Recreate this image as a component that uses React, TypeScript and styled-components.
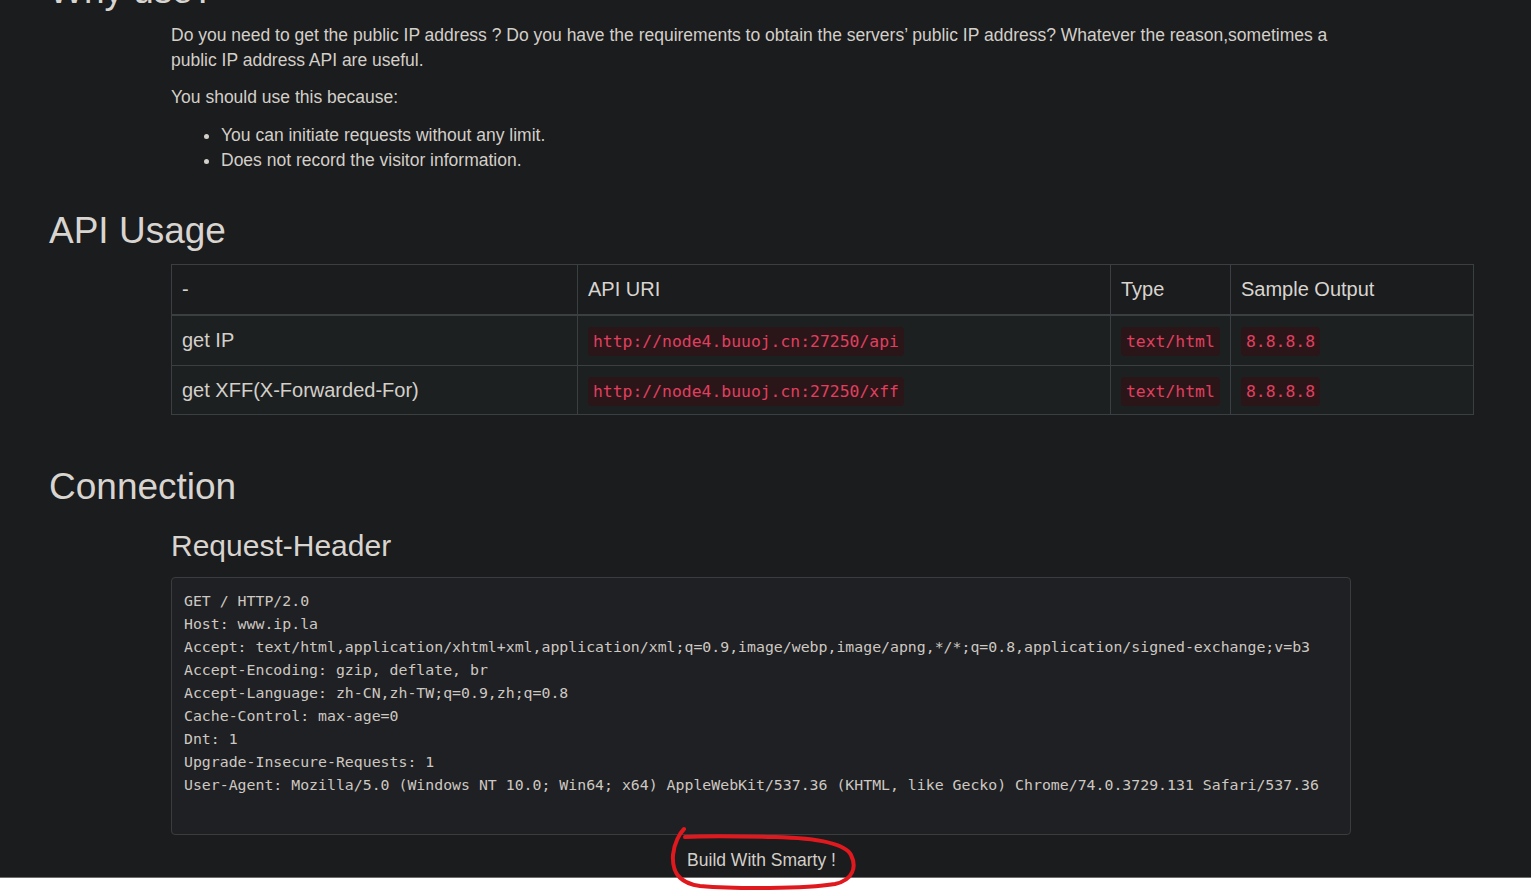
import styled, { createGlobalStyle } from "styled-components";

const GlobalStyle = createGlobalStyle`
  html, body {
    margin: 0;
    padding: 0;
    background: #ffffff;
  }
  body {
    font-family: "Liberation Sans", Arial, sans-serif;
    overflow: hidden;
  }
`;

const Shell = styled.div`
  position: relative;
`;

const Page = styled.div`
  display: flow-root;
  background: #1b1c1e;
  border-bottom: 1px solid #6e6e6e;
  color: #d3cfc9;
`;

const BottomStrip = styled.div`
  height: 14px;
  background: #ffffff;
`;

const Container = styled.div`
  padding-left: 49px;
`;

const Heading = styled.h2<{ $top: number }>`
  margin: ${({ $top }) => $top}px 0 0;
  font-size: 37px;
  line-height: 44px;
  font-weight: 400;
  color: #d8d4cf;
`;

const SubHeading = styled.h3`
  margin: 19px 0 0;
  font-size: 30px;
  line-height: 36px;
  font-weight: 400;
  color: #d8d4cf;
`;

const Indent = styled.div`
  padding-left: 122px;
`;

const Text = styled.p<{ $top: number }>`
  margin: ${({ $top }) => $top}px 0 0;
  max-width: 1180px;
  font-size: 17.5px;
  line-height: 25px;
`;

const List = styled.ul`
  margin: 13px 0 0;
  padding-left: 50px;
  font-size: 17.5px;
  line-height: 25px;
`;

const Table = styled.table`
  margin-top: 11px;
  width: 1302px;
  table-layout: fixed;
  border-collapse: collapse;
  font-size: 20px;
  line-height: 29px;
`;

const HeadCell = styled.th<{ $w: number }>`
  box-sizing: border-box;
  width: ${({ $w }) => $w}px;
  padding: 10px 10px;
  text-align: left;
  font-weight: 400;
  color: #d8d4cf;
  border: 1px solid #3c3f41;
  border-bottom-width: 2px;
  background: #1b1c1e;
`;

const Row = styled.tr`
  background: #1d2021;
`;

const Cell = styled.td`
  box-sizing: border-box;
  padding: 10px 10px 9.5px;
  border: 1px solid #3c3f41;
  color: #d3cfc9;
`;

const Code = styled.code`
  font-family: "DejaVu Sans Mono", "Liberation Mono", monospace;
  font-size: 16.4px;
  line-height: 1;
  color: #e0405f;
  background: #2a1519;
  padding: 5px 5px;
  border-radius: 4px;
`;

const Pre = styled.pre`
  box-sizing: border-box;
  width: 1180px;
  margin: 13px 0 0;
  padding: 12px 12px 14px;
  background: #1f2023;
  border: 1px solid #3a3c3e;
  border-radius: 4px;
  color: #cdc8c2;
  font-family: "DejaVu Sans Mono", "Liberation Mono", monospace;
  font-size: 14.85px;
  line-height: 23px;
  white-space: pre;
`;

const Footer = styled.footer`
  margin-top: 13px;
  padding: 0 8px 4px 0;
  text-align: center;
  font-size: 17.5px;
  line-height: 25px;
  color: #d3cfc9;
`;

const Mark = styled.svg`
  position: absolute;
  left: 665px;
  top: 825px;
  width: 195px;
  height: 66px;
  overflow: visible;
  pointer-events: none;
`;

const rows = [
  { name: "get IP", uri: "http://node4.buuoj.cn:27250/api" },
  { name: "get XFF(X-Forwarded-For)", uri: "http://node4.buuoj.cn:27250/xff" },
];

const header = `GET / HTTP/2.0
Host: www.ip.la
Accept: text/html,application/xhtml+xml,application/xml;q=0.9,image/webp,image/apng,*/*;q=0.8,application/signed-exchange;v=b3
Accept-Encoding: gzip, deflate, br
Accept-Language: zh-CN,zh-TW;q=0.9,zh;q=0.8
Cache-Control: max-age=0
Dnt: 1
Upgrade-Insecure-Requests: 1
User-Agent: Mozilla/5.0 (Windows NT 10.0; Win64; x64) AppleWebKit/537.36 (KHTML, like Gecko) Chrome/74.0.3729.131 Safari/537.36

`;

export default function App() {
  return (
    <Shell>
      <GlobalStyle />
      <Page>
        <Container>
          <Heading $top={-31}>Why use?</Heading>
          <Indent>
            <Text $top={10}>
              Do you need to get the public IP address ? Do you have the requirements to obtain the
              servers’ public IP address? Whatever the reason,sometimes a public IP address API are
              useful.
            </Text>
            <Text $top={12}>You should use this because:</Text>
            <List>
              <li>You can initiate requests without any limit.</li>
              <li>Does not record the visitor information.</li>
            </List>
          </Indent>

          <Heading $top={36}>API Usage</Heading>
          <Indent>
            <Table>
              <thead>
                <tr>
                  <HeadCell $w={406}>-</HeadCell>
                  <HeadCell $w={533}>API URI</HeadCell>
                  <HeadCell $w={120}>Type</HeadCell>
                  <HeadCell $w={243}>Sample Output</HeadCell>
                </tr>
              </thead>
              <tbody>
                {rows.map((r) => (
                  <Row key={r.uri}>
                    <Cell>{r.name}</Cell>
                    <Cell>
                      <Code>{r.uri}</Code>
                    </Cell>
                    <Cell>
                      <Code>text/html</Code>
                    </Cell>
                    <Cell>
                      <Code>8.8.8.8</Code>
                    </Cell>
                  </Row>
                ))}
              </tbody>
            </Table>
          </Indent>

          <Heading $top={50}>Connection</Heading>
          <Indent>
            <SubHeading>Request-Header</SubHeading>
            <Pre>{header}</Pre>
          </Indent>
        </Container>
        <Footer>Build With Smarty !</Footer>
      </Page>
      <BottomStrip />
      <Mark viewBox="0 0 195 66">
        <path
          d="M19 4 C15 8, 9 18, 8 30 C7 45, 12 58, 35 61 C70 64, 140 64, 170 59 C188 55, 192 42, 186 30 C180 18, 150 13, 110 12 C70 11, 35 11, 20 12"
          fill="none"
          stroke="#e0191f"
          strokeWidth={4}
          strokeLinecap="round"
        />
      </Mark>
    </Shell>
  );
}
